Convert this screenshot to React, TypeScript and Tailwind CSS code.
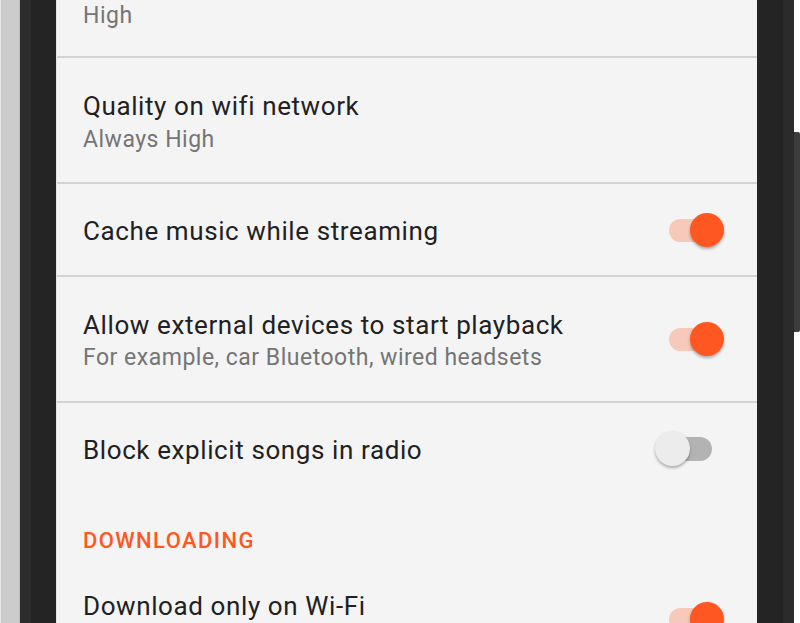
type ToggleProps = { on: boolean };

function Toggle({ on }: ToggleProps) {
  if (on) {
    return (
      <div className="relative w-[55px] h-[34px] mr-[33px] shrink-0">
        <div className="absolute left-0 top-[6px] w-[50px] h-[23px] rounded-full bg-[#f6c9ba]" />
        <div className="absolute left-[21px] top-0 w-[34px] h-[34px] rounded-full bg-[#ff5722] shadow-[0_2px_3px_rgba(0,0,0,0.3)]" />
      </div>
    );
  }
  return (
    <div className="relative w-[57px] h-[35px] mr-[45px] shrink-0">
      <div className="absolute right-0 top-[6px] w-[52px] h-[24px] rounded-full bg-[#b3b3b3]" />
      <div className="absolute left-0 top-0 w-[35px] h-[35px] rounded-full bg-[#ececec] shadow-[0_2px_3px_rgba(0,0,0,0.3)]" />
    </div>
  );
}

function Divider() {
  return <div className="h-[2px] bg-[#d3d3d3] shrink-0" />;
}

type RowProps = { title: string; subtitle?: string; toggle?: boolean; h: string; tall?: boolean };

function Row({ title, subtitle, toggle, h, tall }: RowProps) {
  return (
    <div className={`flex items-center justify-between shrink-0 ${h}`}>
      <div className={`flex flex-col pl-[26px] pt-[3px] ${tall ? 'pb-[30px]' : ''}`}>
        <span className="text-[26px] leading-[34px] tracking-[0.6px] text-[#212121] whitespace-nowrap">{title}</span>
        {subtitle && (
          <span className="text-[23px] leading-[30px] mt-[1px] tracking-[0.5px] text-[#757575] whitespace-nowrap">
            {subtitle}
          </span>
        )}
      </div>
      {toggle !== undefined && <Toggle on={toggle} />}
    </div>
  );
}

export default function App() {
  return (
    <div className="flex w-[800px] h-[623px] overflow-hidden bg-white font-['Roboto',sans-serif]">
      {/* left edge + bezel */}
      <div className="w-[1px] bg-[#e6e6e6]" />
      <div className="w-[18px] bg-[#cccccc]" />
      <div className="w-[1px] bg-[#bdbdbd]" />
      <div className="w-[11px] bg-[#2c2c2c]" />
      <div className="w-[25px] bg-[#242424]" />

      {/* settings screen */}
      <div className="flex flex-col w-[701px] bg-[#f4f4f4] border-l border-[#e4e4e4]">
        <div className="h-[56px] shrink-0 pl-[26px] pt-[1px]">
          <span className="block text-[23px] leading-[30px] tracking-[0.5px] text-[#757575]">High</span>
        </div>
        <Divider />
        <div className="flex flex-col justify-start shrink-0 h-[124px] pt-[31px]">
          <div className="flex flex-col pl-[26px]">
            <span className="text-[26px] leading-[34px] tracking-[0.6px] text-[#212121]">Quality on wifi network</span>
            <span className="text-[23px] leading-[30px] mt-[2px] tracking-[0.5px] text-[#757575]">Always High</span>
          </div>
        </div>
        <Divider />
        <Row title="Cache music while streaming" toggle={true} h="h-[91px]" />
        <Divider />
        <Row
          title="Allow external devices to start playback"
          subtitle="For example, car Bluetooth, wired headsets"
          toggle={true}
          h="h-[124px]"
        />
        <Divider />
        <Row title="Block explicit songs in radio" toggle={false} h="h-[91px]" />
        <div className="h-[63px] shrink-0 pl-[26px] pt-[33px]">
          <span className="block text-[22px] leading-[28px] font-medium tracking-[1.4px] text-[#ff5722]">
            DOWNLOADING
          </span>
        </div>
        <Row title="Download only on Wi-Fi" toggle={true} h="h-[124px]" tall />
      </div>

      {/* right bezel */}
      <div className="w-[26px] bg-[#242424]" />
      <div className="w-[11px] bg-[#2b2b2b]" />
      <div className="flex flex-col w-[6px] bg-white">
        <div className="h-[132px]" />
        <div className="h-[200px] bg-[#3c3c3c] rounded-r-[2px]" />
      </div>
    </div>
  );
}
